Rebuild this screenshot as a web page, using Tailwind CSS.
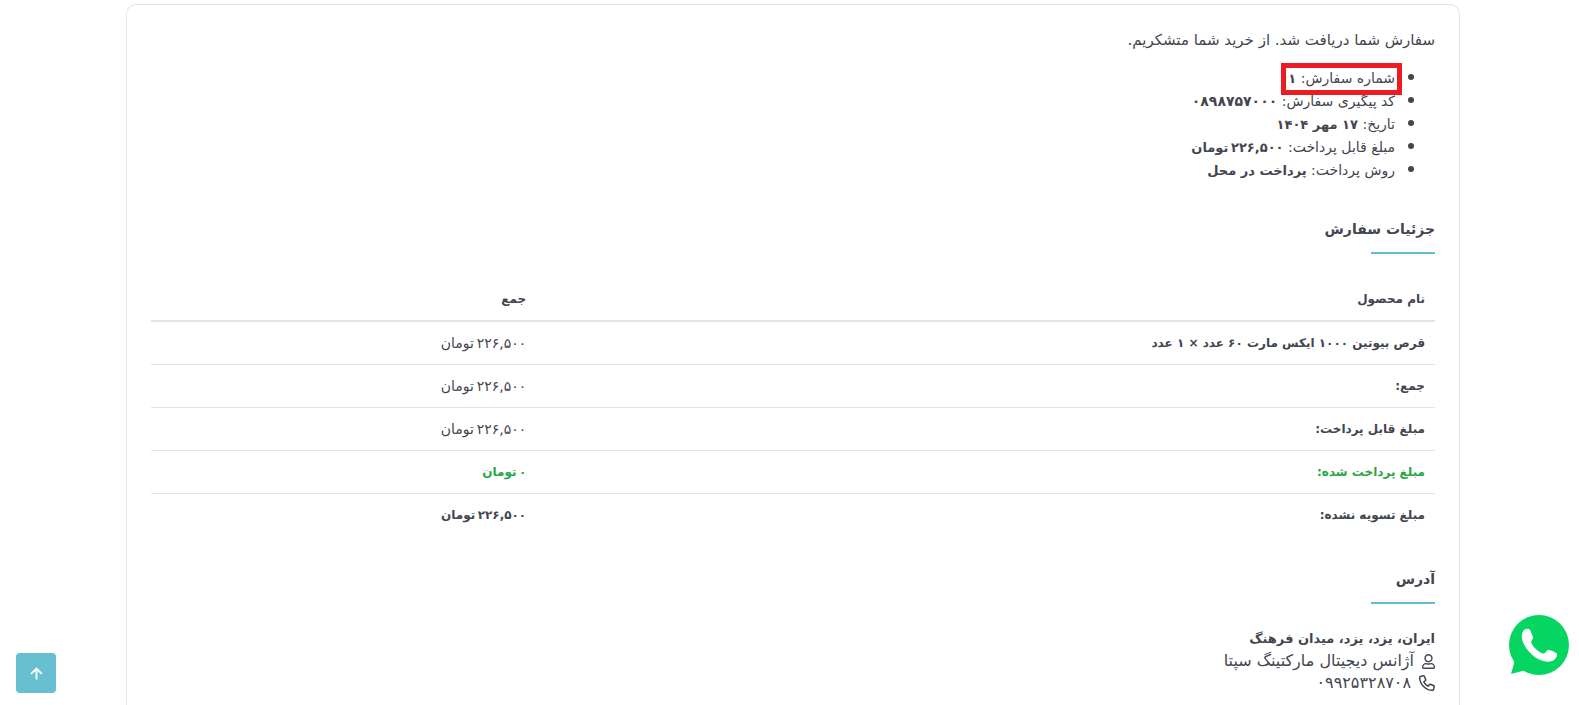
<!DOCTYPE html>
<html lang="fa" dir="rtl">
<head>
    <meta charset="UTF-8">
    <meta name="viewport" content="width=device-width, initial-scale=1.0">
    <title>سفارش دریافت شد</title>
    <script src="https://cdn.jsdelivr.net/npm/@tailwindcss/browser@4"></script>
</head>
<body class="bg-white font-['DejaVu_Sans',sans-serif] text-[15px] leading-[22px] text-[#43454f] overflow-hidden">
    <main class="pt-1 pr-[119px] pl-[126px]">
        <div class="min-h-screen rounded-t-[10px] border border-b-0 border-[#e3e6e9] px-6 pt-6">
            <p class="mb-[14px]">سفارش شما دریافت شد. از خرید شما متشکریم.</p>

            <!-- Order summary -->
            <ul class="mb-[38px] list-disc pr-10 text-sm leading-[23px] marker:text-[20px]">
                <li class="h-[23px]">
                    <span class="relative">شماره سفارش: <strong class="text-[13px]">۱</strong>
                        <span class="absolute -inset-x-[7px] -top-[7px] h-8 border-5 border-[#ed1c24]"></span>
                    </span>
                </li>
                <li class="h-[23px]">کد پیگیری سفارش: <strong>۰۸۹۸۷۵۷۰۰۰</strong></li>
                <li class="h-[23px]">تاریخ: <strong class="text-[13px]">۱۷ مهر ۱۴۰۴</strong></li>
                <li class="h-[23px]">مبلغ قابل پرداخت: <strong class="text-[13px]">۲۲۶,۵۰۰&thinsp;تومان</strong></li>
                <li class="h-[23px]">روش پرداخت: <strong class="text-[13px]">پرداخت در محل</strong></li>
            </ul>

            <!-- Order details -->
            <h2 class="mb-3 text-sm leading-[22px] font-bold">جزئیات سفارش</h2>
            <div class="mb-6 h-[2px] w-16 bg-[#62bfcf]"></div>
            <table class="mb-8 w-full text-right text-xs leading-[22px]">
                <thead>
                    <tr class="border-b-2 border-[#e3e6e9]">
                        <th class="w-[70%] p-[10px]">نام محصول</th>
                        <th class="p-[10px]">جمع</th>
                    </tr>
                </thead>
                <tbody>
                    <tr class="border-b border-[#e3e6e9]">
                        <td class="p-[10px] font-bold">قرص بیوتین ۱۰۰۰ ایکس مارت ۶۰ عدد × ۱ عدد</td>
                        <td class="p-[10px] text-sm leading-[22px]">۲۲۶,۵۰۰&thinsp;تومان</td>
                    </tr>
                    <tr class="border-b border-[#e3e6e9]">
                        <th class="p-[10px]">جمع:</th>
                        <td class="p-[10px] text-sm leading-[22px]">۲۲۶,۵۰۰&thinsp;تومان</td>
                    </tr>
                    <tr class="border-b border-[#e3e6e9]">
                        <th class="p-[10px]">مبلغ قابل پرداخت:</th>
                        <td class="p-[10px] text-sm leading-[22px]">۲۲۶,۵۰۰&thinsp;تومان</td>
                    </tr>
                    <tr class="border-b border-[#e3e6e9] font-bold">
                        <th class="p-[10px] text-[#28a745]">مبلغ پرداخت شده:</th>
                        <td class="p-[10px] text-[#28a745]">۰&thinsp;تومان</td>
                    </tr>
                    <tr class="font-bold">
                        <th class="p-[10px]">مبلغ تسویه نشده:</th>
                        <td class="p-[10px]">۲۲۶,۵۰۰&thinsp;تومان</td>
                    </tr>
                </tbody>
            </table>

            <!-- Address -->
            <h2 class="mb-3 text-sm leading-[22px] font-bold">آدرس</h2>
            <div class="mb-6 h-[2px] w-16 bg-[#62bfcf]"></div>
            <address class="text-base leading-[22px] not-italic">
                <p class="text-[13px] font-bold">ایران، یزد، یزد، میدان فرهنگ</p>
                <p class="flex items-center gap-2">
                    <svg class="h-[15px] w-[13px]" viewBox="0 0 448 512" fill="currentColor">
                        <path d="M313.600 304c-28.700 0-42.500 16-89.600 16-47.100 0-60.800-16-89.600-16C60.200 304 0 364.200 0 438.400V464c0 26.500 21.500 48 48 48h352c26.500 0 48-21.500 48-48v-25.600c0-74.200-60.200-134.400-134.400-134.400zM400 464H48v-25.600c0-47.600 38.800-86.400 86.400-86.400 14.600 0 38.300 16 89.600 16 51.700 0 74.900-16 89.600-16 47.600 0 86.400 38.800 86.400 86.400V464zM224 288c79.500 0 144-64.500 144-144S303.500 0 224 0 80 64.500 80 144s64.500 144 144 144zm0-240c52.900 0 96 43.100 96 96s-43.100 96-96 96-96-43.100-96-96 43.100-96 96-96z"/>
                    </svg>
                    آژانس دیجیتال مارکتینگ سپتا
                </p>
                <p class="flex items-center gap-2">
                    <svg class="h-4 w-4" viewBox="0 0 16 16" fill="none" stroke="currentColor" stroke-width="1.5" stroke-linejoin="round">
                        <path d="M1.300 1.600 4.400.8c.4-.1.7.1.9.4l1.400 3.400c.1.300 0 .7-.2.9L4.800 6.900c.9 1.900 2.400 3.400 4.300 4.300l1.400-1.700c.2-.300.6-.4.9-.2l3.400 1.400c.300.2.5.5.4.9l-.8 3.100c-.1.400-.4.6-.8.6C6.600 15.300.7 9.400.7 2.400c0-.4.2-.7.600-.8z"/>
                    </svg>
                    ۰۹۹۲۵۳۲۸۷۰۸
                </p>
            </address>
        </div>
    </main>

    <button type="button" aria-label="بازگشت به بالا" class="fixed bottom-3 left-4 flex size-10 items-center justify-center rounded bg-[#66c0d0] text-white">
        <svg class="size-[13px]" viewBox="0 0 14 14" fill="none" stroke="currentColor" stroke-width="2">
            <path d="M7 13.500V2M1.200 7.400 7 1.600l5.800 5.800"/>
        </svg>
    </button>

    <a href="#" aria-label="واتساپ" class="fixed right-[10px] bottom-[30px]">
        <svg class="size-[60px]" viewBox="0 0 60 60">
            <circle cx="30" cy="30" r="30" fill="#05d561"/>
            <path d="M6 45 2 59l15-4z" fill="#05d561"/>
            <path d="M15.500 14.600c1.500-1.300 4.500-1.300 5.500.2l3.200 7.500c.3 1.200-2.200 4-2 5.200 1.800 4.700 7.300 9.500 12.300 11.200 1.500 0 2.800-3.200 4.500-4 1.700 0 6.800 2.300 8.700 3.500 1 2-.7 5.300-2.700 6.800-4.500 3-10.500 1.500-16-1C21 39.500 14.500 31 13 24c-.7-3.500.3-7.500 2.500-9.400z" fill="#fff"/>
        </svg>
    </a>
</body>
</html>
